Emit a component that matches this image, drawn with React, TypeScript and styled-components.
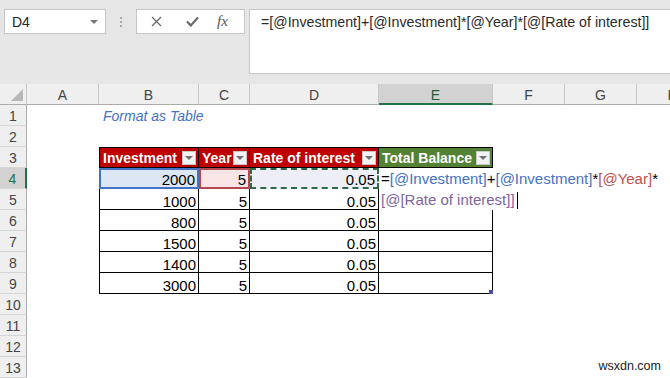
import React from 'react';
import styled, { createGlobalStyle, css } from 'styled-components';

const GlobalStyle = createGlobalStyle`
  html, body {
    margin: 0;
    padding: 0;
    background: #ffffff;
    font-family: "Liberation Sans", Arial, sans-serif;
    overflow: hidden;
  }
`;

const Page = styled.div`
  position: relative;
  width: 670px;
  height: 378px;
  overflow: hidden;
  display: flex;
  flex-direction: column;
`;

/* ---------- formula bar area ---------- */

const TopBar = styled.div`
  height: 84px;
  flex: none;
  background: #e6e6e6;
  display: flex;
  align-items: flex-start;
  padding: 9px 0 0 4px;
  box-sizing: border-box;
`;

const NameBox = styled.div`
  width: 102px;
  height: 25px;
  box-sizing: border-box;
  background: #fff;
  border: 1px solid #c6c6c6;
  display: flex;
  align-items: center;
  justify-content: space-between;
  padding: 1px 7px 0 7px;
  font-size: 14px;
  color: #222;
`;

const Caret = styled.span`
  width: 0;
  height: 0;
  border-left: 4px solid transparent;
  border-right: 4px solid transparent;
  border-top: 4px solid #777;
`;

const Grip = styled.div`
  width: 30px;
  height: 25px;
  display: flex;
  flex-direction: column;
  align-items: center;
  justify-content: center;
  gap: 2px;

  span {
    width: 2px;
    height: 2px;
    background: #a8a8a8;
  }
`;

const FxBox = styled.div`
  width: 109px;
  height: 25px;
  box-sizing: border-box;
  background: #fff;
  border: 1px solid #c6c6c6;
  display: grid;
  grid-template-columns: 36px 36px 1fr;
  align-items: center;
  justify-items: center;
  padding-left: 1px;
`;

const Fx = styled.span`
  font-family: "Liberation Serif", "Times New Roman", serif;
  font-style: italic;
  font-size: 15px;
  color: #555;
  padding-right: 9px;
`;

const FormulaBar = styled.div`
  flex: 1;
  height: 65px;
  margin-left: 4px;
  box-sizing: border-box;
  background: #fff;
  border: 1px solid #c6c6c6;
  border-right: none;
  padding: 3px 0 0 11px;
  font-size: 14.2px;
  line-height: 18px;
  color: #2a2a2a;
  white-space: nowrap;
`;

/* ---------- sheet grid ---------- */

const Sheet = styled.div`
  display: grid;
  grid-template-columns: 27px 72px 100px 51px 129px 114px 72px 72px 72px;
  grid-auto-rows: 21px;
  font-size: 15px;
`;

const Corner = styled.div`
  background: #efefef;
  border-right: 1px solid #c6c6c6;
  border-bottom: 1px solid #ababab;
  box-sizing: border-box;
  display: flex;
  align-items: flex-end;
  justify-content: flex-end;
  padding: 0 3px 3px 0;

  &::after {
    content: '';
    width: 0;
    height: 0;
    border-left: 12px solid transparent;
    border-bottom: 12px solid #b8b8b8;
  }
`;

const ColHead = styled.div<{ $active?: boolean }>`
  box-sizing: border-box;
  background: #efefef;
  border-right: 1px solid #c6c6c6;
  border-bottom: 1px solid #ababab;
  font-size: 14px;
  line-height: 21px;
  padding-top: 1px;
  text-align: center;
  color: #444;
  ${(p) =>
    p.$active &&
    css`
      background: #d2d2d2;
      color: #1e5e3a;
      border-bottom: 2px solid #217346;
    `}
`;

const RowHead = styled.div<{ $active?: boolean }>`
  box-sizing: border-box;
  background: #efefef;
  border-right: 1px solid #ababab;
  border-bottom: 1px solid #d6d6d6;
  font-size: 14px;
  line-height: 21px;
  padding-top: 1px;
  text-align: center;
  color: #444;
  ${(p) =>
    p.$active &&
    css`
      background: #d2d2d2;
      color: #217346;
      border-right: 2px solid #217346;
    `}
`;

const Blank = styled.div`
  background: transparent;
`;

const Note = styled.div`
  font-size: 14px;
  font-style: italic;
  color: #4472c4;
  line-height: 21px;
  padding: 1px 0 0 4px;
  white-space: nowrap;
`;

const TH = styled.div<{ $bg: string; $first?: boolean }>`
  box-sizing: border-box;
  background: ${(p) => p.$bg};
  border-top: 1px solid #000;
  border-right: 1px solid #000;
  border-bottom: 1px solid #000;
  ${(p) => p.$first && 'border-left: 1px solid #000;'}
  color: #fff;
  font-weight: bold;
  font-size: 14px;
  display: flex;
  align-items: center;
  justify-content: space-between;
  padding: 0 2px 0 3px;
  white-space: nowrap;
  overflow: hidden;
`;

const FilterBtn = styled.span`
  flex: none;
  width: 14px;
  height: 14px;
  box-sizing: border-box;
  background: #f3f3f3;
  border: 1px solid #c8c8c8;
  display: flex;
  align-items: center;
  justify-content: center;

  &::after {
    content: '';
    width: 0;
    height: 0;
    border-left: 4px solid transparent;
    border-right: 4px solid transparent;
    border-top: 4px solid #707070;
  }
`;

type Mark = 'blue' | 'red' | 'ants';

const markStyles: Record<Mark, ReturnType<typeof css>> = {
  blue: css`
    background: #dce6f4;
    border: 2px solid #4472c4;
  `,
  red: css`
    background: #f9e5e5;
    border: 2px solid #b5474e;
  `,
  ants: css`
    background: #eeeef6;
    border: 2px dashed #2d6a47;
  `,
};

const TD = styled.div<{ $first?: boolean; $mark?: Mark; $handle?: boolean }>`
  position: relative;
  box-sizing: border-box;
  background: #fff;
  border-right: 1px solid #000;
  border-bottom: 1px solid #000;
  ${(p) => p.$first && 'border-left: 1px solid #000;'}
  ${(p) => p.$mark && markStyles[p.$mark]}
  display: flex;
  align-items: flex-end;
  justify-content: flex-end;
  padding-right: 2px;
  line-height: 14px;
  color: #000;

  ${(p) =>
    p.$handle &&
    css`
      &::after {
        content: '';
        position: absolute;
        right: -1px;
        bottom: -1px;
        width: 4px;
        height: 4px;
        background: #4b4b9c;
      }
    `}
`;

const EditCell = styled.div`
  grid-column: span 4;
  grid-row: span 2;
  position: relative;
  z-index: 1;
  background: #fff;
  padding-left: 2px;
  line-height: 21px;
  white-space: nowrap;
  color: #000;
`;

const Ref = styled.span<{ $c: string }>`
  color: ${(p) => p.$c};
`;

const Cursor = styled.span`
  display: inline-block;
  width: 1px;
  height: 17px;
  margin-left: 2px;
  background: #000;
  vertical-align: -4px;
`;

const Watermark = styled.div`
  position: absolute;
  right: 9px;
  bottom: 5px;
  font-size: 12.5px;
  color: #222;
`;

const BLUE = '#4472c4';
const RED = '#c0504d';
const PURPLE = '#8064a2';

const letters = ['A', 'B', 'C', 'D', 'E', 'F', 'G', 'H'];

const data: [number, number, string][] = [
  [2000, 5, '0.05'],
  [1000, 5, '0.05'],
  [800, 5, '0.05'],
  [1500, 5, '0.05'],
  [1400, 5, '0.05'],
  [3000, 5, '0.05'],
];

const headers: { label: string; bg: string }[] = [
  { label: 'Investment', bg: '#c00000' },
  { label: 'Year', bg: '#c00000' },
  { label: 'Rate of interest', bg: '#c00000' },
  { label: 'Total Balance', bg: '#548235' },
];

function DataRow({ n, row }: { n: number; row: [number, number, string] }) {
  const first = n === 4;
  const cells = [
    <RowHead key="h" $active={first}>{n}</RowHead>,
    <Blank key="a" />,
    <TD key="b" $first $mark={first ? 'blue' : undefined}>{row[0]}</TD>,
    <TD key="c" $mark={first ? 'red' : undefined}>{row[1]}</TD>,
    <TD key="d" $mark={first ? 'ants' : undefined}>{row[2]}</TD>,
  ];
  if (first) {
    // the cell being edited covers E4:H5
    cells.push(
      <EditCell key="e">
        =<Ref $c={BLUE}>[@Investment]</Ref>+<Ref $c={BLUE}>[@Investment]</Ref>*
        <Ref $c={RED}>[@Year]</Ref>*
        <br />
        <Ref $c={PURPLE}>[@[Rate of interest]]</Ref>
        <Cursor />
      </EditCell>,
    );
  } else if (n > 5) {
    cells.push(<TD key="e" $handle={n === 9} />);
    cells.push(<Blank key="f" />, <Blank key="g" />, <Blank key="hh" />);
  }
  return <>{cells}</>;
}

function EmptyRow({ n }: { n: number }) {
  return (
    <>
      <RowHead>{n}</RowHead>
      {letters.map((l) => (
        <Blank key={l} />
      ))}
    </>
  );
}

export default function App() {
  return (
    <>
      <GlobalStyle />
      <Page>
        <TopBar>
          <NameBox>
            D4
            <Caret />
          </NameBox>
          <Grip>
            <span />
            <span />
            <span />
          </Grip>
          <FxBox>
            <svg width="11" height="11" viewBox="0 0 11 11">
              <path d="M1 1 L10 10 M10 1 L1 10" stroke="#6a6a6a" strokeWidth="1.3" fill="none" />
            </svg>
            <svg width="13" height="11" viewBox="0 0 13 11">
              <path d="M1 5.5 L4.8 9.5 L12 1.5" stroke="#6a6a6a" strokeWidth="2.2" fill="none" />
            </svg>
            <Fx>fx</Fx>
          </FxBox>
          <FormulaBar>=[@Investment]+[@Investment]*[@Year]*[@[Rate of interest]]</FormulaBar>
        </TopBar>

        <Sheet>
          <Corner />
          {letters.map((l) => (
            <ColHead key={l} $active={l === 'E'}>
              {l}
            </ColHead>
          ))}

          <RowHead>1</RowHead>
          <Blank />
          <Note>Format as Table</Note>
          {letters.slice(2).map((l) => (
            <Blank key={l} />
          ))}

          <EmptyRow n={2} />

          <RowHead>3</RowHead>
          <Blank />
          {headers.map((h, i) => (
            <TH key={h.label} $bg={h.bg} $first={i === 0}>
              {h.label}
              <FilterBtn />
            </TH>
          ))}
          <Blank />
          <Blank />
          <Blank />

          {data.map((row, i) => (
            <DataRow key={i} n={i + 4} row={row} />
          ))}

          {[10, 11, 12, 13].map((n) => (
            <EmptyRow key={n} n={n} />
          ))}
        </Sheet>

        <Watermark>wsxdn.com</Watermark>
      </Page>
    </>
  );
}
